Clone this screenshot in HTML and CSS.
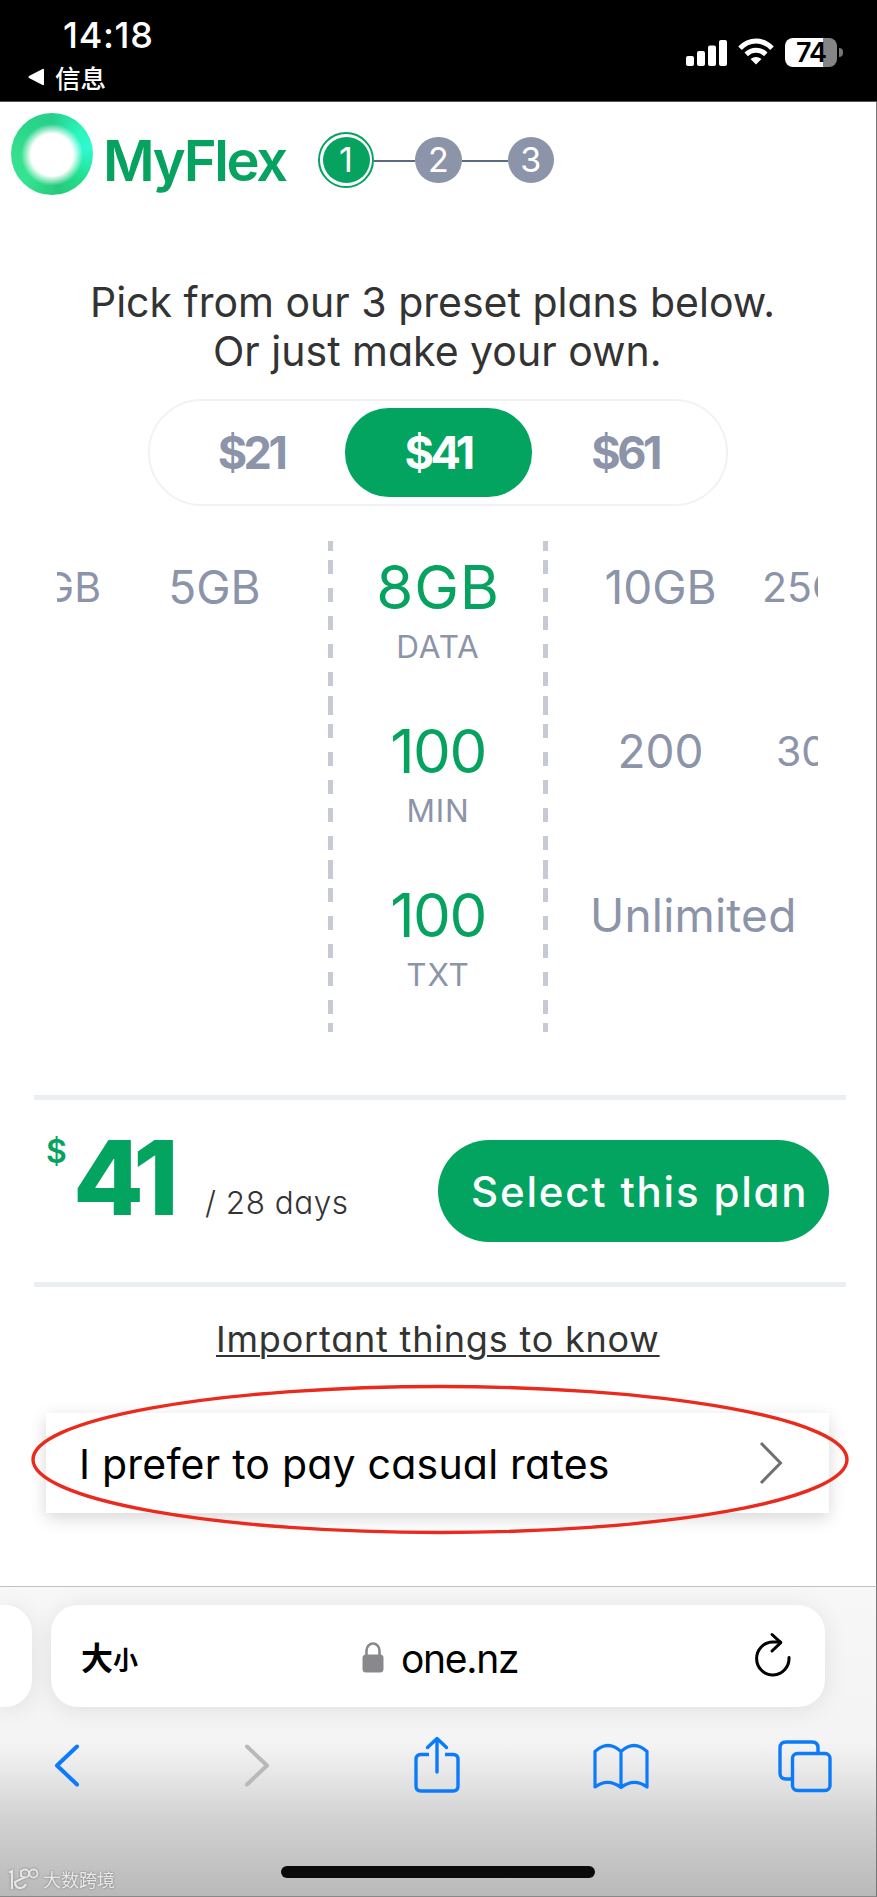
FILE: index.html
```html
<!DOCTYPE html>
<html lang="en">
<head>
<meta charset="utf-8">
<title>MyFlex</title>
<link rel="stylesheet" href="styles.css">
</head>
<body>
<div class="screen">
  <header class="status">
    <div class="status-left">
      <div class="time">14:18</div>
      <div class="return"><svg width="17" height="18" viewBox="0 0 17 18"><path d="M1.500 9L15 1.800V16.200Z" fill="#fff" stroke="#fff" stroke-width="2" stroke-linejoin="round"/></svg><span>信息</span></div>
    </div>
    <div class="status-right">
      <svg class="signal" width="41" height="26" viewBox="0 0 41 26" fill="#fff"><rect x="0" y="16" width="8" height="10" rx="2"/><rect x="11" y="11" width="8" height="15" rx="2"/><rect x="22" y="5.500" width="8" height="20.500" rx="2"/><rect x="33" y="0" width="8" height="26" rx="2"/></svg>
      <svg class="wifi" width="36" height="27" viewBox="0 0 36 27" fill="none" stroke="#fff" stroke-width="5"><path d="M2 10.300Q9 3.100 18 3.100T34 10.300"/><path d="M8.200 16.400Q12.500 12.200 18 12.200T27.800 16.400"/><path d="M12.500 21Q18 17 23.500 21L18 26.500Z" fill="#fff" stroke="none"/></svg>
      <div class="battery">74</div><i class="nub"></i>
    </div>
  </header>

  <main class="page">
    <div class="brand">
      <div class="ring"></div>
      <div class="wordmark">MyFlex</div>
      <div class="steps">
        <div class="step-active"><span>1</span></div><i class="join join-a"></i>
        <div class="step">2</div><i class="join join-b"></i>
        <div class="step">3</div>
      </div>
    </div>

    <h1 class="intro"><span class="intro-a">Pick from our 3 preset plans below.</span><span class="intro-b">Or just make your own.</span></h1>

    <div class="presets"><div class="preset">$21</div><div class="preset preset-on">$41</div><div class="preset">$61</div></div>

    <div class="picker">
      <div class="row">
        <div class="far-left">2GB</div><div class="near">5GB</div>
        <div class="current"><b class="gb">8GB</b><small>DATA</small></div>
        <div class="near near-right">10GB</div><div class="far-right">25GB</div>
      </div>
      <div class="row">
        <div></div><div></div>
        <div class="current"><b>100</b><small>MIN</small></div>
        <div class="near near-right">200</div><div class="far-right far-min">300</div>
      </div>
      <div class="row">
        <div></div><div></div>
        <div class="current"><b>100</b><small>TXT</small></div>
        <div class="unlimited">Unlimited</div>
      </div>
    </div>

    <section class="summary">
      <div class="price"><span class="dollar">$</span><span class="amount">41</span><span class="period">/ 28 days</span></div>
      <div class="select">Select this plan</div>
    </section>

    <div class="know"><a>Important things to know</a></div>

    <div class="casual"><span>I prefer to pay casual rates</span>
      <svg width="24" height="44" viewBox="0 0 24 44" fill="none" stroke="#707070" stroke-width="3"><path d="M2 2L21.500 22L2 42"/></svg>
      <svg class="mark" width="820" height="151" viewBox="0 0 820 151"><ellipse cx="410" cy="75.500" rx="407" ry="73" fill="none" stroke="#ea2a1d" stroke-width="3.400"/></svg>
    </div>
  </main>

  <footer class="browser">
    <div class="tabs">
      <div class="tab-prev"></div>
      <div class="address">
        <div class="size"><span class="da">大</span><span class="xiao">小</span></div>
        <div class="host"><svg width="22" height="31" viewBox="0 0 22 31"><path d="M4.500 14V8.500a6.500 7 0 0 1 13 0V14" fill="none" stroke="#89898d" stroke-width="2.600"/><rect x=".5" y="12.500" width="21" height="18" rx="3.500" fill="#89898d"/></svg><span>one.nz</span></div>
        <svg class="reload" width="38" height="46" viewBox="0 0 38 46" fill="none" stroke="#000" stroke-width="3" stroke-linecap="round" stroke-linejoin="round"><path d="M35 26.500A16.200 16.500 0 1 1 18.800 11H26.500"/><path d="M18 3.500L26.800 11.700L18 20"/></svg>
      </div>
    </div>
    <nav class="tools">
      <svg class="t-back" width="26" height="44" viewBox="0 0 26 44" fill="none" stroke="#0b7bfb" stroke-width="4" stroke-linecap="round" stroke-linejoin="round"><path d="M23 2.500L3 21.500L23 40.500"/></svg>
      <svg class="t-fwd" width="26" height="44" viewBox="0 0 26 44" fill="none" stroke="#b9b9ba" stroke-width="4" stroke-linecap="round" stroke-linejoin="round"><path d="M3 2.500L23 21.500L3 40.500"/></svg>
      <svg class="t-share" width="46" height="58" viewBox="0 0 46 58" fill="none" stroke="#0b7bfb" stroke-width="3.400" stroke-linejoin="round"><path d="M15 18.500H7Q2 18.500 2 23.500V50Q2 55 7 55H39Q44 55 44 50V23.500Q44 18.500 39 18.500H31"/><path d="M23 36V3M13.500 11.500L23 2.500L32.500 11.500" stroke-linecap="round"/></svg>
      <svg class="t-book" width="56" height="48" viewBox="0 0 56 48" fill="none" stroke="#0b7bfb" stroke-width="3.200" stroke-linejoin="round"><path d="M28 8.500Q15-3.500 2 8.500V44Q15 34.500 28 44.500Q41 34.500 54 44V8.500Q41-3.500 28 8.500V44"/></svg>
      <svg class="t-tabs" width="54" height="53" viewBox="0 0 54 53" fill="none" stroke="#0b7bfb" stroke-width="3.400"><rect x="14.500" y="13.500" width="37.500" height="37" rx="5"/><path d="M14.500 39H8Q2 39 2 33V8Q2 2 8 2H34Q40 2 40 8V13.500"/></svg>
    </nav>
    <div class="bottom">
      <div class="watermark"><svg width="32" height="23" viewBox="0 0 32 23" fill="none" stroke="#e7e7e7" stroke-width="2.300"><path d="M1 4.500L4 3V21M17 9L7 14M7 13Q7 20 12 20Q16 20 18 16"/><path d="M13 9V2M13 5.500a4 4 0 1 1 8 0a4 4 0 1 1-8 0M21.500 5.500a4 4 0 1 1 8 0a4 4 0 1 1-8 0" stroke-width="1.800"/></svg><span>大数跨境</span></div>
      <div class="home"></div>
    </div>
  </footer>
</div>
</body>
</html>
```
FILE: styles.css
```css
* { box-sizing: border-box; }
body { margin: 0; background: #fff; font-family: Inter, "Noto Sans CJK SC", sans-serif; color: #333; }
svg { display: block; flex: none; }
.screen { width: 877px; height: 1897px; overflow: hidden; display: flex; flex-direction: column; white-space: nowrap; }

.status { height: 102px; flex: none; background: #000; border-bottom: 1px solid #555; display: flex; justify-content: space-between; color: #fff; }
.status-left { padding: 14px 0 0 28px; }
.time { font: 500 36px/43px Inter, sans-serif; padding-left: 35px; letter-spacing: .7px; }
.return { display: flex; align-items: center; gap: 10px; height: 40px; font: 500 25.500px/40px "Noto Sans CJK SC", sans-serif; }
.status-right { display: flex; align-items: flex-start; padding-right: 34px; }
.signal { margin-top: 40px; }
.wifi { margin: 38px 0 0 11px; }
.battery { width: 52px; height: 29px; margin: 38px 0 0 11px; border-radius: 8px; background: linear-gradient(90deg, #fff 74%, #858585 74%); color: #000; font: 600 27px/29px Inter, sans-serif; text-align: center; letter-spacing: -1px; }
.nub { width: 4px; height: 9px; margin: 48px 0 0 2px; background: #777; border-radius: 0 5px 5px 0; }

.page { height: 1484px; flex: none; border-right: 1px solid #777; font-feature-settings: "cv11"; }
.brand { height: 164px; display: flex; padding: 11px 0 0 11px; }
.ring { width: 82px; height: 82px; border-radius: 50%; background: radial-gradient(circle at 50% 51%, #fff 0 21px, transparent 31px), conic-gradient(from 0deg, #27cf8c, #2af5bb 50deg, #2ffad0 80deg, #22df8e 130deg, #27c97c 170deg, #35e391 225deg, #37df8c 270deg, #29d58a 320deg, #27cf8c); }
.wordmark { width: 198px; margin: 14px 0 0 10px; font-size: 56px; line-height: 68px; font-weight: 600; color: #06a260; letter-spacing: -2.300px; }
.steps { display: flex; align-items: center; height: 56px; margin: 19px 0 0 17px; font-size: 34px; line-height: 46px; color: #fff; text-align: center; }
.step-active { width: 56px; height: 56px; border: 2.500px solid #06a260; border-radius: 50%; padding: 2.500px; }
.step-active span { display: block; border-radius: 50%; background: #06a260; height: 46px; }
.step { width: 46.500px; height: 46.500px; border-radius: 50%; background: #8c94a9; }
.join { height: 2px; background: #5d6b80; margin-top: 2px; }
.join-a { width: 41px; }
.join-b { width: 46px; }

.intro { margin: 0; height: 133px; padding-top: 12px; font-size: 41px; line-height: 49px; font-weight: 400; }
.intro span { display: block; }
.intro-a { padding-left: 90px; }
.intro-b { padding-left: 213px; }

.presets { width: 580px; height: 107px; margin-left: 148px; border: 2px solid #f0f2f5; border-radius: 54px; display: flex; justify-content: center; align-items: center; }
.preset { width: 187px; height: 89px; border-radius: 44px; font-size: 45px; line-height: 89px; font-weight: 700; text-align: center; color: #8c94a9; letter-spacing: -3.500px; }
.preset-on { background: #02a460; color: #fff; }

.picker { margin: 35px 0 0 57px; width: 761px; height: 491px; overflow: hidden; color: #8c94a9; }
.row { height: 164px; display: grid; grid-template-columns: 44px 227px 220px 214px 56px; font-size: 46px; line-height: 92px; }
.row:last-child { height: 163px; }
.far-left { font-size: 41px; display: flex; justify-content: flex-end; }
.near { text-align: center; }
.near-right { padding-left: 11px; }
.far-right { font-size: 41px; }
.far-min { padding-left: 14px; }
.unlimited { padding-left: 42px; letter-spacing: .2px; }
.current { --c: #c5cad5; --edge: linear-gradient(var(--c), var(--c)); --dash: repeating-linear-gradient(var(--c) 0 14px, transparent 14px 28px); text-align: center; background: var(--edge) 0 0/5px 10px no-repeat, var(--edge) 0 100%/5px 9px no-repeat, var(--dash) 0 19px/5px 126px no-repeat, var(--edge) 100% 0/5px 10px no-repeat, var(--edge) 100% 100%/5px 9px no-repeat, var(--dash) 100% 19px/5px 126px no-repeat; }
.current b, .current small { display: block; }
.current b { font-weight: 400; font-size: 60px; line-height: 92px; color: #06a260; letter-spacing: -1.500px; }
.current .gb { letter-spacing: .8px; }
.current small { font-size: 31.500px; line-height: 28px; letter-spacing: .8px; }

.summary { margin: 63px 0 0 34px; width: 812px; height: 192px; border-top: 5px solid #eceff2; border-bottom: 5px solid #eceff2; display: flex; justify-content: space-between; padding: 40px 17px 0 12px; }
.price { display: flex; }
.dollar { width: 27px; font-size: 32px; line-height: 24px; font-weight: 600; color: #06a260; }
.amount { width: 132px; font-size: 103px; line-height: 75px; font-weight: 800; color: #02a460; letter-spacing: -6px; }
.period { font-size: 31.500px; line-height: 126px; font-weight: 300; letter-spacing: .5px; }
.select { width: 391px; height: 102px; border-radius: 51px; background: #02a460; color: #fff; font-size: 42px; line-height: 103px; font-weight: 500; padding-left: 33px; letter-spacing: 1.800px; }

.know { padding: 29px 0 0 216px; font-size: 36px; line-height: 46px; height: 126px; }
.know a { text-decoration: underline; text-decoration-thickness: 2px; text-underline-offset: 3px; letter-spacing: .8px; }

.casual { position: relative; margin-left: 46px; width: 783px; height: 100px; background: #fff; box-shadow: 0 5px 16px rgba(0,0,0,.16); display: flex; align-items: center; justify-content: space-between; padding: 0 46px 0 33px; font-size: 41px; line-height: 50px; color: #000; letter-spacing: .22px; }
.casual span { padding-top: 2px; }
.mark { position: absolute; left: -16px; top: -29.500px; }

.browser { height: 311px; flex: none; border-top: 1px solid #bfc1c2; border-right: 1px solid #777; border-bottom: 1px solid #888; background: linear-gradient(#f7f7f7, #f4f4f5 50%, #ececed 57%, #d2d2d2 75%, #b9b9b9); }
.tabs { display: flex; gap: 19px; padding-top: 18px; }
.tab-prev { width: 32px; height: 102px; background: #fff; border-radius: 0 27px 27px 0; box-shadow: 0 3px 25px rgba(0,0,0,.09); }
.address { width: 774px; height: 102px; background: #fff; border-radius: 27px; box-shadow: 0 3px 25px rgba(0,0,0,.09); display: grid; grid-template-columns: 281px 392px 38px; padding-left: 30px; color: #000; }
.size { display: flex; font-family: "Noto Sans CJK SC", sans-serif; font-weight: 700; line-height: 102px; }
.da { font-size: 32px; }
.xiao { font-size: 25px; line-height: 107px; }
.host { display: flex; align-items: center; gap: 17px; font: 39px/100px Inter, sans-serif; letter-spacing: -1.300px; }
.host svg { margin-top: -2px; }
.reload { margin-top: 26px; }
.tools { display: flex; height: 90px; }
.t-back { margin: 37px 0 0 54px; }
.t-fwd { margin: 37px 0 0 164px; }
.t-share { margin: 29px 0 0 144px; }
.t-book { margin: 36px 0 0 133px; }
.t-tabs { margin: 33px 0 0 129px; }
.bottom { height: 98px; display: flex; padding-left: 8px; }
.watermark { width: 273px; display: flex; gap: 3px; padding-top: 71px; color: #e9e9e9; font: 18px/23px "Noto Sans CJK SC", sans-serif; filter: drop-shadow(0 0 1px #777); }
.home { width: 314px; height: 12px; margin-top: 69px; border-radius: 6px; background: #0a0a0a; }
```
